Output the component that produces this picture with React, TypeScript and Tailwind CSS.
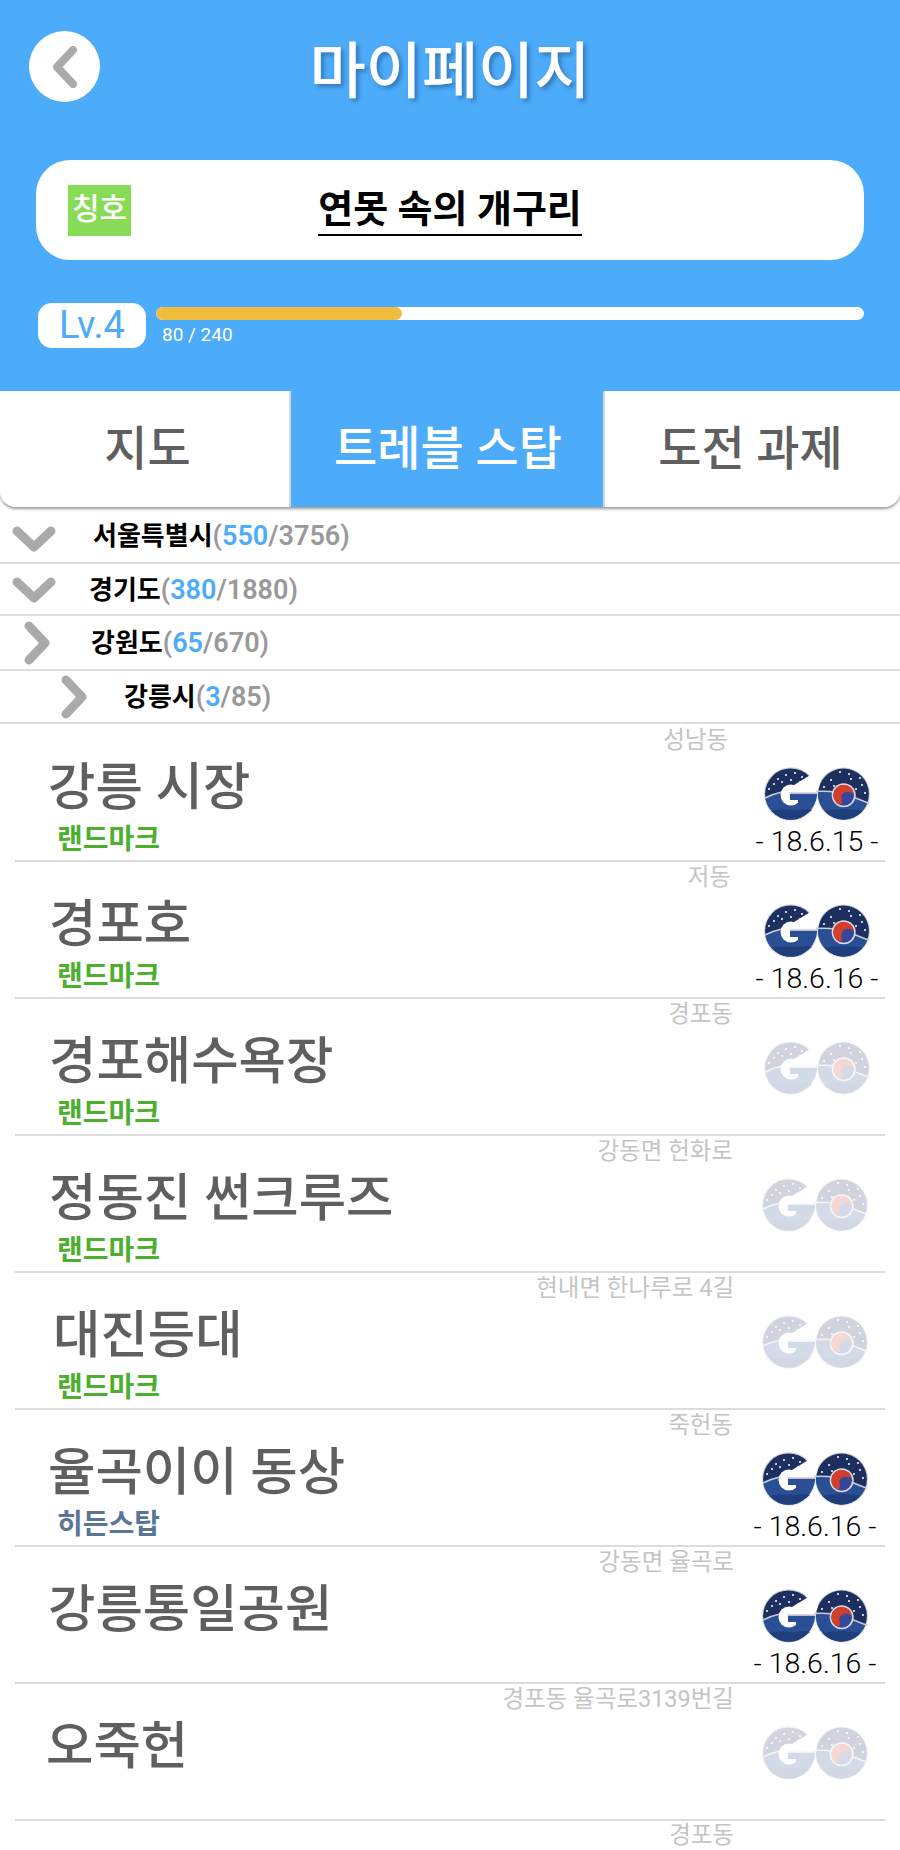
const KR = "font-['Roboto','Noto_Sans_CJK_KR',sans-serif]";

const regions = [
  { name: "서울특별시", done: "550", total: "3756", open: true, rowClass: "h-[57px] pl-[12px]", chevClass: "mt-[10px]", labelClass: "pl-[37px] pt-[4px]" },
  { name: "경기도", done: "380", total: "1880", open: true, rowClass: "h-[52px] pl-[12px]", chevClass: "mt-[4px]", labelClass: "pl-[33px] pt-[2px]" },
  { name: "강원도", done: "65", total: "670", open: false, rowClass: "h-[55px] pl-[24px]", chevClass: "", labelClass: "pl-[39px] pt-[2px]" },
  { name: "강릉시", done: "3", total: "85", open: false, rowClass: "h-[53px] pl-[61px]", chevClass: "", labelClass: "pl-[35px] pt-[2px]" },
];

const stops = [
  { name: "강릉 시장", addr: "성남동", kind: "랜드마크", date: "18.6.15", nameClass: "pl-[48px]", addrClass: "pr-[172px]", logoClass: "" },
  { name: "경포호", addr: "저동", kind: "랜드마크", date: "18.6.16", nameClass: "pl-[49px]", addrClass: "pr-[169px]", logoClass: "" },
  { name: "경포해수욕장", addr: "경포동", kind: "랜드마크", nameClass: "pl-[49px]", addrClass: "pr-[167px]", logoClass: "pt-[3px]" },
  { name: "정동진 썬크루즈", addr: "강동면 헌화로", kind: "랜드마크", nameClass: "pl-[49px]", addrClass: "pr-[167px]", logoClass: "pt-[1px] pr-[4px]" },
  { name: "대진등대", addr: "현내면 한나루로 4길", kind: "랜드마크", nameClass: "pl-[53px]", addrClass: "pr-[166px]", logoClass: "pr-[4px]" },
  { name: "율곡이이 동상", addr: "죽헌동", kind: "히든스탑", date: "18.6.16", nameClass: "pl-[48px]", addrClass: "pr-[167px]", logoClass: "pr-[4px]" },
  { name: "강릉통일공원", addr: "강동면 율곡로", kind: "", date: "18.6.16", nameClass: "pl-[48px]", addrClass: "pr-[166px]", logoClass: "pr-[4px]" },
  { name: "오죽헌", addr: "경포동 율곡로3139번길", kind: "", nameClass: "pl-[46px]", addrClass: "pr-[166px]", logoClass: "pt-[2px] pr-[4px]" },
];

function Chevron({ open, className }: { open: boolean; className: string }) {
  if (open) {
    return (
      <svg width="44" height="28" viewBox="0 0 44 28" className={`shrink-0 ${className}`}>
        <path d="M5 5 L22 21 L39 5" fill="none" stroke="#aaaaaa" strokeWidth="9" strokeLinecap="round" strokeLinejoin="round" />
      </svg>
    );
  }
  return (
    <svg width="28" height="44" viewBox="0 0 28 44" className={`shrink-0 ${className}`}>
      <path d="M5 5 L21 22 L5 39" fill="none" stroke="#aaaaaa" strokeWidth="9" strokeLinecap="round" strokeLinejoin="round" />
    </svg>
  );
}

const stars = [
  [14, 12], [22, 8], [31, 6], [10, 17], [18, 15], [27, 13], [38, 10], [36, 15], [5, 22],
  [76, 5], [87, 12], [96, 11], [67, 13], [60, 20], [70, 19], [98, 18], [101, 26], [92, 22], [85, 7],
];

function GoLogo({ faded }: { faded: boolean }) {
  return (
    <svg width="106" height="54" viewBox="0 0 106 54" className={faded ? "opacity-20" : ""}>
      <defs>
        <clipPath id="go-g">
          <circle cx="26.7" cy="27" r="25.6" />
        </clipPath>
        <clipPath id="go-o">
          <circle cx="79.5" cy="27" r="25.4" />
        </clipPath>
      </defs>
      {/* outer halo */}
      <circle cx="26.7" cy="27" r="26.7" fill="#cfd3da" />
      <circle cx="79.5" cy="27" r="26.5" fill="#cfd3da" />

      {/* G */}
      <g clipPath="url(#go-g)">
        <rect width="54" height="54" fill="#1d2f5f" />
        <path d="M0 31 Q9 27 18 25 L54 25 V54 H0 Z" fill="#2a4f95" />
        <path d="M0 45 Q24 39 54 47 V54 H0 Z" fill="#1f3f7c" />
      </g>
      <path d="M48 7 L30 18 L27 27 H56 V13 Z" fill="#ffffff" />
      <circle cx="27" cy="28" r="10.5" fill="#ffffff" />
      <path d="M26 26.5 H53 C53 36 47 45 34 50.5 V33 H26 Z" fill="#2a4f95" />
      <path d="M34 43 Q42 41 48 43 Q42 48 34 50.5 Z" fill="#1f3f7c" />
      <path d="M25.5 26 H54 M1 31 Q9 27 17 25.3" fill="none" stroke="#c9ced6" strokeWidth="1.4" />

      {/* O */}
      <g clipPath="url(#go-o)">
        <rect x="53" width="53" height="54" fill="#1d2f5f" />
        <path d="M53 24.5 Q70 23 89 30 L106 37 V54 H53 Z" fill="#2a4f95" />
        <path d="M53 45 Q80 39 106 45 V54 H53 Z" fill="#1f3f7c" />
      </g>
      <path d="M52 24.5 Q70 23 89 30 L105.5 36.5" fill="none" stroke="#c9ced6" strokeWidth="1.5" />
      <circle cx="79.7" cy="28.3" r="12" fill="#d9dce2" />
      <circle cx="79.7" cy="28.3" r="10.4" fill="#36479a" />
      <path d="M90 27 C86 24 80 24 78 28 C76 32 80 35 76 38 A10.4 10.4 0 1 1 90 27 Z" fill="#d33f2b" />
      {stars.map(([x, y]) => (
        <circle key={`${x}-${y}`} cx={x} cy={y} r="1" fill="#ffffff" />
      ))}
    </svg>
  );
}

export default function App() {
  return (
    <div className={`${KR} h-[1850px] w-[900px] overflow-hidden bg-white`}>
      <header className="h-[391px] bg-[#4dacfa]">
        <div className="grid h-[160px] grid-cols-[1fr_auto_1fr] items-start pl-[29px] pt-[31px]">
          <button className="flex size-[71px] items-center justify-center rounded-full bg-white">
            <svg width="30" height="42" viewBox="0 0 30 42">
              <path d="M23 4 L7 21 L23 38" fill="none" stroke="#aaaaaa" strokeWidth="8" strokeLinecap="round" strokeLinejoin="round" />
            </svg>
          </button>
          <h1 className="-ml-[29px] -mt-[2px] text-[61px] leading-[86px] font-medium text-white [text-shadow:3px_3px_4px_rgba(30,80,140,0.55)]">
            마이페이지
          </h1>
          <div />
        </div>

        <div className="mx-[36px] grid h-[100px] grid-cols-[1fr_auto_1fr] items-center rounded-[34px] bg-white px-[32px]">
          <span className="flex h-[51px] w-[63px] items-center justify-center bg-[#88dc55] pb-[4px] text-[30px] font-medium text-white">칭호</span>
          <span className="border-b-2 border-black text-[38px] leading-[50px] font-bold text-black">연못 속의 개구리</span>
          <div />
        </div>

        <div className="mt-[43px] flex pl-[38px] pr-[36px]">
          <div className="flex h-[45px] w-[108px] shrink-0 items-center justify-center rounded-[14px] bg-white text-[38px] text-[#4dacfa]">Lv.4</div>
          <div className="ml-[10px] flex-1 pt-[4px]">
            <div className="h-[13px] overflow-hidden rounded-full bg-white">
              <div className="h-full w-[246px] rounded-full bg-[#f0bc3e]" />
            </div>
            <p className="ml-[6px] mt-[3px] text-[19px] leading-[24px] text-white">80 / 240</p>
          </div>
        </div>
      </header>

      <nav className="flex h-[116px] overflow-hidden rounded-b-[16px] text-[47px] font-medium shadow-[0_2px_3px_rgba(0,0,0,0.4)]">
        <div className="flex w-[291px] items-center justify-center border-r-2 border-[#d6d6d6] bg-white pl-[6px] text-[#5f5f5f]">지도</div>
        <div className="flex w-[312px] items-center justify-center bg-[#4dacfa] pl-[2px] text-white">트레블 스탑</div>
        <div className="flex flex-1 items-center justify-center border-l-2 border-[#d6d6d6] bg-white pr-[4px] text-[#5f5f5f]">도전 과제</div>
      </nav>

      <div>
        {regions.map((r) => (
          <div key={r.name} className={`flex items-center border-b-2 border-[#dcdcdc] ${r.rowClass}`}>
            <Chevron open={r.open} className={r.chevClass} />
            <span className={`text-[26px] font-bold whitespace-nowrap text-black ${r.labelClass}`}>
              {r.name}
              <span className="text-[27px] font-semibold text-[#999999]">
                (<span className="text-[#4dacfa]">{r.done}</span>/{r.total})
              </span>
            </span>
          </div>
        ))}
      </div>

      <ul className="pt-[1px]">
        {stops.map((s) => (
          <li key={s.name} className="mx-[15px] h-[137px] border-b-2 border-[#dcdcdc]">
            <p className={`-mr-[15px] h-[28px] pt-[1px] text-right text-[23.5px] leading-[28px] text-[#c4c4c4] ${s.addrClass}`}>{s.addr}</p>
            <div className="flex items-start justify-between">
              <div className="-ml-[15px] pt-[4px]">
                <p className={`text-[51.5px] leading-[62px] font-medium text-[#5f5f5f] ${s.nameClass}`}>{s.name}</p>
                <p className={`mt-[3px] pl-[57px] text-[28px] leading-[36px] font-bold ${s.kind === "히든스탑" ? "text-[#5b7596]" : "text-[#4caf2e]"}`}>{s.kind}</p>
              </div>
              <div className={`-mr-[2px] flex w-[140px] flex-col items-center pt-[14px] ${s.logoClass}`}>
                <GoLogo faded={!s.date} />
                {s.date && <p className="whitespace-nowrap pt-[5px] text-[28.5px] leading-[32px] font-light text-black">- {s.date} -</p>}
              </div>
            </div>
          </li>
        ))}
      </ul>
      <p className="pr-[166px] text-right text-[23.5px] leading-[28px] text-[#c4c4c4]">경포동</p>
    </div>
  );
}
